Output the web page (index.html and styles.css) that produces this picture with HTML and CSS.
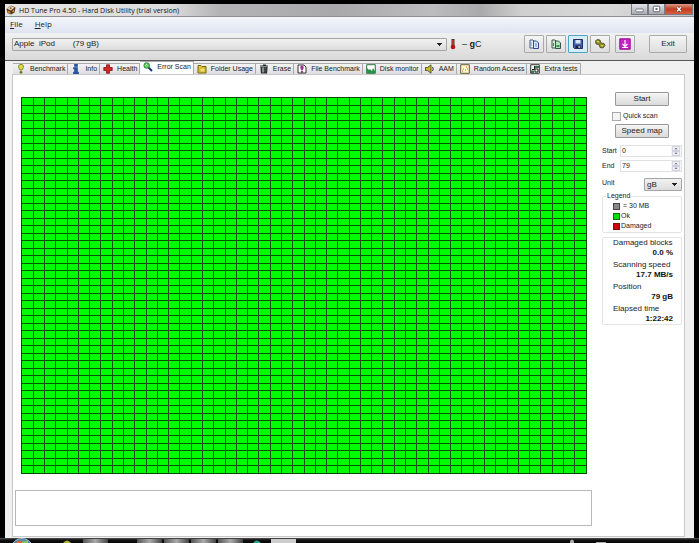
FILE: index.html
```html
<!DOCTYPE html>
<html lang="en">
<head>
<meta charset="utf-8">
<title>HD Tune Pro</title>
<link rel="stylesheet" href="styles.css">
</head>
<body>
<div class="window">
  <header class="titlebar">
    <svg class="app-icon" viewBox="0 0 10 10"><path d="M.5 4 5 .5l4.500 2-1 5L5 9.500 1.500 8z" fill="#4b3626"/><path d="M1 3.800 4.800 1 8.500 2.500 5 5.500z" fill="#f2d9ae"/><path d="M1.500 5.500l2.500 1 .8 2.300L2 7.500zM5.800 6.500l2.500-2.300-.5 3z" fill="#e49236"/><circle cx="4.700" cy="3.200" r="1" fill="#94673a"/></svg>
    <h1>HD Tune Pro 4.50 - Hard Disk Utility (trial version)</h1>
    <div class="caption">
      <button aria-label="Minimize"><svg viewBox="0 0 16 10"><rect x="4" y="5" width="8" height="3" rx="1" fill="#fff" stroke="#555b66" stroke-width=".8"/></svg></button>
      <button aria-label="Maximize"><svg viewBox="0 0 16 10"><rect x="4.500" y="2" width="7" height="6" rx="1" fill="#fff" stroke="#555b66"/><rect x="7" y="4" width="2" height="2" fill="#555b66"/></svg></button>
      <button class="close" aria-label="Close"><svg viewBox="0 0 28 10"><path d="M12 3l4 4.500M16 3l-4 4.500" stroke="#693028" stroke-width="3"/><path d="M12 3l4 4.500M16 3l-4 4.500" stroke="#fff" stroke-width="1.600"/></svg></button>
    </div>
  </header>
  <nav class="menu"><a href="#file"><u>F</u>ile</a><a href="#help"><u>H</u>elp</a></nav>
  <div class="toolbar">
    <select class="drive" aria-label="Drive"><option>Apple&nbsp; iPod &nbsp; &nbsp; &nbsp; &nbsp;(79 gB)</option></select>
    <svg class="thermo" viewBox="0 0 6 12"><path d="M3 1v8" stroke="#443030" stroke-width="3"/><path d="M3 2v7" stroke="#e03028" stroke-width="1.500"/><circle cx="3" cy="9" r="2.300" fill="#b31414"/></svg>
    <span class="temp">– <b>g</b>C</span>
    <div class="tools">
      <button aria-label="Copy text"><svg viewBox="0 0 12 12"><path d="M2 2h3l2 2v6H2z" fill="#eaf0ff" stroke="#415a91"/><path d="M5.500 3h3l2 2v5.500h-5z" fill="#dce8ff" stroke="#304b88"/><path d="M7 6h2M7 8h2M3 5h1M3 7h1" stroke="#6482bb"/></svg></button>
      <button aria-label="Copy image"><svg viewBox="0 0 12 12"><path d="M2 2h3l2 2v6H2z" fill="#d5edda" stroke="#40584b"/><path d="M5.500 3h3l2 2v5.500h-5z" fill="#b9e2bf" stroke="#345342"/><path d="M6.500 7h3v2h-3zM3 5h1v3H3z" fill="#33924a"/></svg></button>
      <button class="active" aria-label="Save"><svg viewBox="0 0 12 12"><path d="M1.500 1.500h9v9h-8l-1-1z" fill="#4662ae" stroke="#202f60"/><path d="M3.500 2h5v3.500h-5z" fill="#d9e5f5"/><path d="M3.500 7.500h5V10h-5z" fill="#17213d"/><path d="M6.500 8h1.200v2H6.500z" fill="#dfe7f6"/></svg></button>
      <button aria-label="Options"><svg viewBox="0 0 12 12"><path d="M1.500 3l1.500-1.500 3 .5 1 3 3 .5 1 2-2 2.500-3-.5-1-3-3-.5z" fill="#8c8c24" stroke="#454612" stroke-width=".8"/><path d="M3 3.500l2 .5M7 7.500l2 .5" stroke="#eeea92" stroke-width="1.200"/></svg></button>
      <button class="apart" aria-label="Minimize to tray"><svg viewBox="0 0 12 12"><path d="M.8.800h10.400v10.400H.8z" fill="#cc20c9" stroke="#8d138b"/><path d="M6 2v6M3.500 6 6 8.500 8.500 6M3 9.500h6" fill="none" stroke="#fff" stroke-width="1.200"/></svg></button>
    </div>
    <button class="exit">Exit</button>
  </div>
  <div class="body">
    <div class="tabs" role="tablist">
      <button role="tab"><svg viewBox="0 0 10 10"><path d="M5 .5C8 .5 8 3 6 6H4C2 3 2 .5 5 .5z" fill="#e2df35" stroke="#69651d" stroke-width=".8"/><circle cx="5" cy="8.300" r="1.400" fill="#77731d"/></svg>Benchmark</button>
      <button role="tab"><svg viewBox="0 0 10 10"><path d="M3.500 0h3v2.500h-3zM2.500 3.500h4V8h1v2h-5V8h1V5h-1z" fill="#245aab" stroke="#173c79" stroke-width=".5"/></svg>Info</button>
      <button role="tab"><svg viewBox="0 0 10 10"><path d="M3.500.8h3v2.700h2.700v3H6.500v2.700h-3V6.500H.8v-3h2.700z" fill="#dc2525" stroke="#761515" stroke-width=".8"/></svg>Health</button>
      <button role="tab" aria-selected="true"><svg viewBox="0 0 10 10"><path d="M5.500 5.500 9 9" stroke="#163478" stroke-width="2"/><circle cx="3.700" cy="3.500" r="2.800" fill="#5bdb5d" stroke="#276a33" stroke-width=".8"/><path d="M2.500 3.500 4 2" stroke="#d8ffd8"/></svg>Error Scan</button>
      <button role="tab"><svg viewBox="0 0 10 10"><path d="M1 1.500h3l1 1h4V9H1z" fill="#e8c82d" stroke="#746415"/><path d="M3 4h5v4H3z" fill="#f2df66" stroke="#a18a20" stroke-width=".5"/></svg>Folder Usage</button>
      <button role="tab"><svg viewBox="0 0 10 10"><path d="M1 2h8M4 1h3M2 3l.5 6h5L8 3" fill="#424647" stroke="#242727" stroke-width="1.200"/><path d="M4 3.500v5" stroke="#ccd1d1"/></svg>Erase</button>
      <button role="tab"><svg viewBox="0 0 10 10"><path d="M1 1h6l2 2v6H1z" fill="#fff" stroke="#333"/><path d="M5 2C7 2 6.500 4 5.500 6h-1C3.500 4 3 2 5 2zM4.300 7h1.400v1.500H4.300z" fill="#aa30a5" stroke="#68205f" stroke-width=".5"/></svg>File Benchmark</button>
      <button role="tab"><svg viewBox="0 0 10 10"><path d="M.7.700h8.600v8.600H.7z" fill="#fff" stroke="#25733d"/><path d="M1 4l2 2 1-1 2 2 1-3 2 3v2H1z" fill="#269248"/></svg>Disk monitor</button>
      <button role="tab"><svg viewBox="0 0 10 10"><path d="M.5 3.500h2L6 .8v8.400L2.500 6.500h-2z" fill="#c9bf2d" stroke="#39371b" stroke-width=".8"/><path d="M7.500 3q1.500 2 0 4" fill="none" stroke="#333"/></svg>AAM</button>
      <button role="tab"><svg viewBox="0 0 10 10"><path d="M.7.700h8.600v8.600H.7z" fill="#fff8cb" stroke="#645b38"/><path d="M2 7h1M3 5h1M5 6h1M6 3h1M7 5h1" stroke="#df6530"/></svg>Random Access</button>
      <button role="tab"><svg viewBox="0 0 10 10"><path d="M.7.700h8.600v8.600H.7z" fill="#f0f4ef" stroke="#303b32"/><path d="M1 6.500h3V9H1zM5 2h4v2H5z" fill="#36774b"/><path d="M2 5.500h2.500V2M5 8V5h3v3z" stroke="#222" fill="#fff"/></svg>Extra tests</button>
    </div>
    <main class="panel">
      <div class="left">
        <div class="map"><svg viewBox="0 0 50 50" preserveAspectRatio="none" role="img" aria-label="Scanned blocks"><path id="lines"/></svg></div>
        <div class="log"></div>
      </div>
      <aside class="side">
        <button class="cmd">Start</button>
        <label class="check"><input type="checkbox">Quick scan</label>
        <button class="cmd">Speed map</button>
        <div class="fields">
          <label for="start">Start</label>
          <div class="spin"><input id="start" value="0"><svg viewBox="0 0 10 12"><path d="M.5.500h9v5h-9zM.5 6.500h9v5h-9z" fill="#f3f3f7" stroke="#c4c4d2"/><path d="M3 4l2-2 2 2zM3 8h4L5 10z" fill="#5a5a94"/></svg></div>
          <label for="end">End</label>
          <div class="spin"><input id="end" value="79"><svg viewBox="0 0 10 12"><path d="M.5.500h9v5h-9zM.5 6.500h9v5h-9z" fill="#f3f3f7" stroke="#c4c4d2"/><path d="M3 4l2-2 2 2zM3 8h4L5 10z" fill="#5a5a94"/></svg></div>
          <label for="unit">Unit</label>
          <select id="unit"><option>gB</option></select>
        </div>
        <fieldset class="legend">
          <legend>Legend</legend>
          <ul><li class="size">= 30 MB</li><li class="ok">Ok</li><li class="bad">Damaged</li></ul>
        </fieldset>
        <dl class="stats">
          <dt>Damaged blocks</dt><dd>0.0 %</dd>
          <dt>Scanning speed</dt><dd>17.7 MB/s</dd>
          <dt>Position</dt><dd>79 gB</dd>
          <dt>Elapsed time</dt><dd>1:22:42</dd>
        </dl>
      </aside>
    </main>
  </div>
</div>
<footer class="taskbar">
  <svg class="orb" viewBox="0 0 22 5"><ellipse cx="11" cy="10" rx="10.500" ry="9.500" fill="#4b86ae" stroke="#9fc0d5"/><path d="M5 5q2-3 5-2v2z" fill="#e7643b"/><path d="M11 3q3 1 6-1v3h-6z" fill="#8dc34a"/></svg>
  <svg class="dot" viewBox="0 0 8 5"><path d="M0 5q4-5 8 0z" fill="#a9b829"/></svg>
  <i class="task"></i><i class="gap"></i><i class="task"></i><i class="task"></i><i class="task"></i><i class="task"></i>
  <svg class="dot" viewBox="0 0 8 5"><path d="M0 5q4-5 8 0z" fill="#28a58b"/></svg>
  <i class="task lit"></i>
  <svg class="tray" viewBox="0 0 40 5"><path d="M3 5V3q2-3 4 0v2zM29 5V4h10v1z" fill="#aaa"/></svg>
</footer>
<script src="map.js"></script>
</body>
</html>
```
FILE: styles.css
```css
* { box-sizing: border-box; }
body {
  margin: 0;
  height: 100vh;
  padding-top: 4px;
  display: flex;
  flex-direction: column;
  background: #000;
  color: #222;
  font: 7px/10px "Liberation Sans", Arial, sans-serif;
}
button, input, select { font: inherit; color: inherit; margin: 0; }
button { padding: 0; }
svg { display: block; }

.window {
  flex: 1;
  min-height: 0;
  margin: 0 5px;
  display: flex;
  flex-direction: column;
  background: #f0f0f0;
}

.titlebar {
  display: flex;
  align-items: center;
  height: 13px;
  padding-left: 1px;
  border-bottom: 1px solid #8d8f94;
  background: linear-gradient(90deg, #e6e6e6 0, #dcdcdc 24%, #b4b4b6 31%, #a9a9ab 48%, #bcbcbe 62%, #aaaaac 69%, #cfcfcf 75%, #d8d8d8 88%, #c2c2c2 100%);
}
.app-icon { width: 10px; height: 10px; margin-right: 3px; }
h1 {
  flex: 1;
  margin: 0;
  padding-top: 2px;
  font: 7px/12px "Open Sans", "Noto Sans", sans-serif;
  color: #111;
}
.caption { display: flex; align-self: flex-start; margin-right: 1px; }
.caption button {
  width: 17px;
  height: 11px;
  border: 1px solid #777a80;
  border-top: 0;
  background: linear-gradient(#e2e4e8, #a8acb3);
}
.caption svg { width: 100%; height: 10px; }
.caption .close { width: 28px; background: linear-gradient(#e09a88, #c13d22 50%, #d5603f); }

.menu {
  display: flex;
  gap: 12px;
  height: 16px;
  padding: 0 5px;
  background: linear-gradient(#f3f5fa, #dfe4f0);
  font: 8px/13px "Open Sans", "Noto Sans", sans-serif;
}
.menu a { color: #222; text-decoration: none; }

.toolbar {
  display: flex;
  align-items: center;
  height: 28px;
  padding: 0 7px 5px;
  border-bottom: 1px solid #555;
  background: linear-gradient(#f1f1f1, #d9d9d9);
}
select {
  appearance: none;
  border: 1px solid #a5a5a5;
  border-radius: 1px;
  background:
    linear-gradient(#222, #222) right 4px top 4px / 5px 1px no-repeat,
    linear-gradient(#222, #222) right 5px top 5px / 3px 1px no-repeat,
    linear-gradient(#222, #222) right 6px top 6px / 1px 1px no-repeat,
    linear-gradient(#f2f2f2, #dcdcdc);
}
.drive { flex: 1; min-width: 0; height: 13px; padding: 0 1px; font-size: 8px; }
.thermo { width: 6px; height: 12px; margin: 0 6px 0 3px; }
.temp { width: 62px; font-size: 9px; }
.tools { display: flex; gap: 2px; }
.tools button, .exit {
  display: grid;
  place-items: center;
  width: 20px;
  height: 18px;
  border: 1px solid #aaa;
  border-radius: 1px;
  background: linear-gradient(#f5f5f5, #dedede);
}
.tools svg { width: 12px; height: 12px; }
.tools .active { border-color: #48a5cf; background: #d8ecf6; }
.tools .apart { margin-left: 3px; }
.exit { width: 38px; margin-left: 14px; }

.body {
  flex: 1;
  min-height: 0;
  display: flex;
  flex-direction: column;
  padding: 0 9px 1px 7px;
}
.tabs { display: flex; align-items: flex-end; height: 13px; padding-left: 1px; }
.tabs button {
  display: flex;
  align-items: center;
  gap: 4px;
  height: 11px;
  padding: 0 2px 0 3px;
  border: 1px solid #aaa;
  border-width: 1px 1px 0 0;
  background: linear-gradient(#f4f4f4, #dedee2);
  white-space: nowrap;
}
.tabs svg { width: 10px; height: 10px; }
.tabs [aria-selected] { height: 13px; background: #fff; padding-bottom: 2px; }

.panel {
  flex: 1;
  min-height: 0;
  display: flex;
  gap: 10px;
  padding: 0 2px;
  border: 1px solid #c8c8c8;
  background: #fff;
}
.left { flex: 1; min-width: 0; display: flex; flex-direction: column; }
.map {
  flex: 1;
  min-height: 0;
  margin: 22px 5px 16px 6px;
  background: #00fc00;
  border: 1px solid #064806;
}
.map svg { width: 100%; height: 100%; }
.map path { stroke: #075207; stroke-width: 1px; vector-effect: non-scaling-stroke; shape-rendering: crispEdges; }
.log { height: 36px; margin-bottom: 10px; border: 1px solid #b8b8b8; }

.side { width: 80px; padding-top: 17px; display: flex; flex-direction: column; }
.cmd {
  width: 54px;
  height: 14px;
  flex: none;
  margin-left: 13px;
  border: 1px solid #999;
  border-radius: 1px;
  background: linear-gradient(#f5f5f5, #dadada);
}
.cmd, .exit, .stats { font-size: 8px; }
.check { display: flex; align-items: center; gap: 2px; height: 18px; padding: 2px 0 0 10px; }
.check input {
  appearance: none;
  width: 9px;
  height: 9px;
  margin: 0;
  border: 1px solid #aaa;
  background: #f4f4f4;
}
.fields {
  display: grid;
  grid-template-columns: 18px minmax(0, 1fr);
  row-gap: 3px;
  align-items: center;
  margin-top: 7px;
}
.spin { display: flex; height: 12px; border: 1px solid #e2e2e2; }
.spin input { flex: 1; width: 0; min-width: 0; border: 0; padding: 0 1px; background: none; }
.spin svg { flex: none; width: 10px; height: 10px; }
.fields select { justify-self: end; width: 38px; height: 13px; margin-top: 3px; padding: 0 2px; font-size: 8px; }
.legend {
  margin: 0;
  padding: 0 0 1px 10px;
  border: 1px solid #e4e4e4;
  border-radius: 2px;
}
legend { margin-left: -7px; padding: 0 1px; }
ul { margin: 0; padding: 0; list-style: none; }
li { display: flex; align-items: center; gap: 1px; }
li::before { content: ""; width: 5px; height: 5px; border: 1px solid #444; background: #888; }
.size { gap: 3px; }
.ok::before { background: #00e000; border-color: #176817; }
.bad::before { background: #d00010; border-color: #761212; }
.stats {
  margin: 4px 0 0;
  padding: 0 8px 0 10px;
  border: 1px solid #e4e4e4;
  border-radius: 2px;
}
dd { margin: 0 0 2px; text-align: right; font-weight: bold; color: #111; }
dl dd:last-child { margin: 0; }

.taskbar {
  display: flex;
  align-items: flex-end;
  gap: 2px;
  height: 5px;
  padding-left: 11px;
  background: linear-gradient(#555, #111 40%, #050505);
}
.orb { width: 22px; height: 5px; }
.dot { width: 8px; height: 5px; margin: 0 10px 0 28px; }
.task { width: 25px; height: 4px; background: linear-gradient(90deg, #555, #aaa, #444); }
.gap { width: 25px; }
.lit { background: #ccc; }
.taskbar .dot ~ .dot { margin: 0 8px; }
.tray { width: 40px; height: 5px; margin: 0 92px 0 auto; }
```
FILE: map.js
```js
// Draws the separators between the 50 x 50 scanned blocks.
let d = "";
for (let i = 1; i < 50; i++) {
  d += `M${i} 0V50M0 ${i}H50`;
}
document.getElementById("lines").setAttribute("d", d);
```
